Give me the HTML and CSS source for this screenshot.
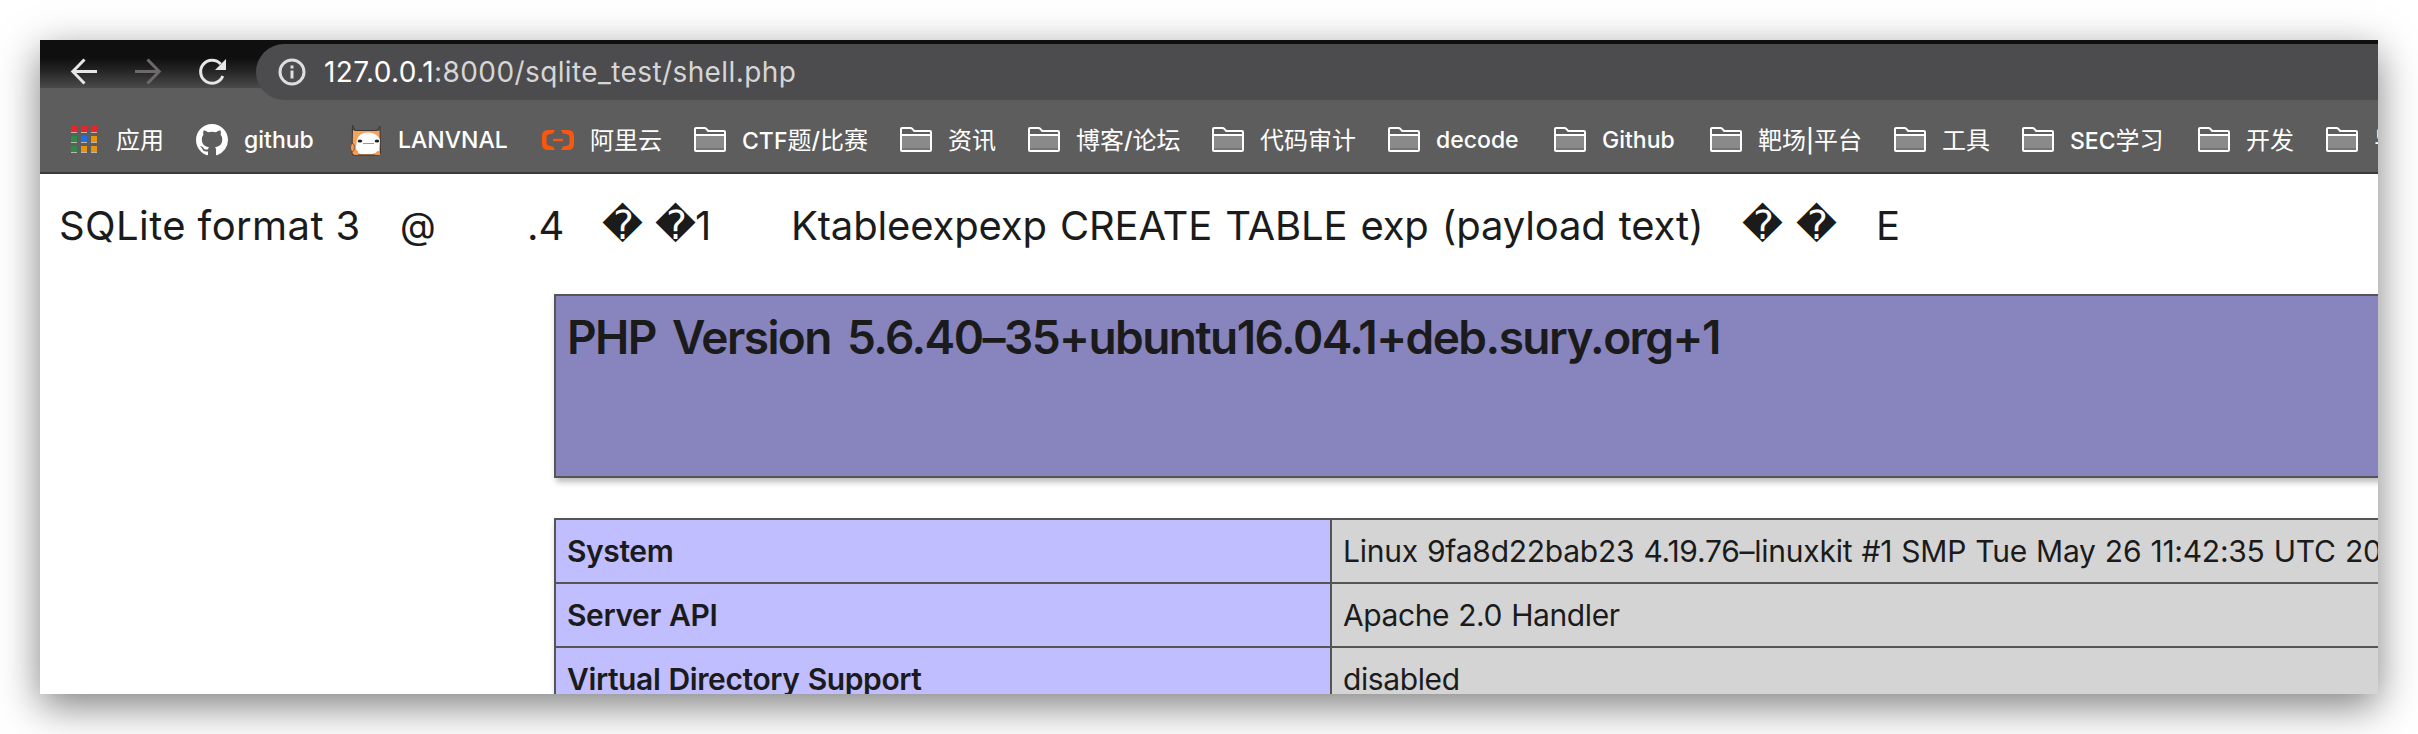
FILE: index.html
```html
<!DOCTYPE html>
<html lang="zh-CN">
<head>
<meta charset="utf-8">
<title>phpinfo()</title>
<link rel="stylesheet" href="styles.css">
</head>
<body>
<svg class="defs" width="0" height="0">
  <symbol id="folder" viewBox="0 0 32 32">
    <rect x="2" y="12" width="28" height="13" fill="#8a8a8a"/>
    <rect x="2" y="24" width="28" height="2" fill="#757575"/>
    <path d="M1 26.5V5Q1 4 2 4H10.5Q11.5 4 12.3 4.9L14.2 7H30Q31 7 31 8V26Q31 27 30 27H2Q1 27 1 26Z" fill="none" stroke="#fff" stroke-width="2"/>
    <path d="M1 11H31" stroke="#fff" stroke-width="2"/>
  </symbol>
</svg>
<div class="window">
  <header class="chrome">
    <div class="toolbar">
      <nav class="nav">
        <svg width="32" height="32" viewBox="0 0 32 32" fill="none" stroke="#e6e6e6" stroke-width="3"><path d="M29 15.5H5M16.5 3.5L4.8 15.5L16.5 27.5"/></svg>
        <svg width="32" height="32" viewBox="0 0 32 32" fill="none" stroke="#6d696a" stroke-width="3"><path d="M3 15.5H27M15.5 3.5L27.2 15.5L15.5 27.5"/></svg>
        <svg width="32" height="32" viewBox="0 0 32 32" fill="none" stroke="#e6e6e6" stroke-width="3"><path d="M24.6 8A11.5 11.5 0 1 0 26.8 20"/><path d="M30 3V14H19Z" fill="#e6e6e6" stroke="none"/></svg>
      </nav>
      <div class="omnibox">
        <svg width="28" height="28" viewBox="0 0 28 28"><circle cx="14" cy="14" r="12" fill="none" stroke="#dedede" stroke-width="3"/><path d="M12.5 7.5H15.5V10.5H12.5ZM12.5 12.5H15.5V20.5H12.5Z" fill="#dedede"/></svg>
        <span class="url"><b>127.0.0.1</b>:8000/sqlite_test/shell.php</span>
      </div>
    </div>
    <div class="bookmarks">
      <a class="bm w96"><svg width="32" height="32" viewBox="0 0 32 32">
        <path d="M3 8.500h6M13 8.500h6M23 8.500h6M3 18.500h6M13 18.500h6M23 18.500h6M3 28.500h6M13 28.500h6M23 28.500h6" stroke="#bdb5ad"/>
        <path d="M3 2h6v6h-6zM13 2h6v6h-6zM23 2h6v6h-6z" fill="#eb2429"/>
        <path d="M3 12h6v6h-6zM3 22h6v6h-6z" fill="#2e8b45"/>
        <path d="M13 12h6v6h-6z" fill="#1f6fe6"/>
        <path d="M23 12h6v6h-6zM13 22h6v6h-6zM23 22h6v6h-6z" fill="#e8930f"/>
      </svg><span class="label"><i>应用</i></span></a>
      <a class="bm w122"><svg width="32" height="32" viewBox="0 0 16 16"><path fill="#fff" d="M8 0C3.58 0 0 3.58 0 8c0 3.54 2.29 6.53 5.470 7.590.4.070.55-.17.55-.38 0-.19-.01-.82-.01-1.490-2.010.37-2.530-.49-2.690-.94-.09-.23-.48-.94-.82-1.130-.28-.15-.68-.52-.01-.53.63-.01 1.080.58 1.230.82.72 1.210 1.870.87 2.330.66.070-.52.28-.87.51-1.070-1.780-.2-3.640-.89-3.640-3.950 0-.87.31-1.590.82-2.150-.08-.2-.36-1.020.08-2.120 0 0 .67-.21 2.200.82.64-.18 1.320-.27 2-.27s1.360.09 2 .27c1.530-1.040 2.200-.82 2.200-.82.44 1.100.16 1.920.08 2.120.51.56.82 1.270.82 2.150 0 3.070-1.870 3.750-3.650 3.950.29.25.54.73.54 1.480 0 1.070-.01 1.930-.01 2.200 0 .21.15.46.55.38A8.010 8.010 0 0 0 16 8c0-4.420-3.580-8-8-8z"/></svg><span class="label">github</span></a>
      <a class="bm w160"><svg width="32" height="32" viewBox="0 0 32 32">
        <path d="M2.500 1L5 6.500H27L30 2L30.500 29Q30 31 28 31H4Q2 31 2 29Z" fill="#f4a35f" stroke="#3b3430" stroke-width="1"/>
        <path d="M2.500 1L2.800 6L5.500 7ZM30 2L29.800 6.500L27 7Z" fill="#4a4039"/>
        <path d="M7 16Q9 8.500 18 8.500Q27 8.500 30 16L29 27Q25 30 22 30H11Q6 29 6 23Z" fill="#fff"/>
        <path d="M5 28Q6 24 8 28V31H4ZM25 31Q27 25 30 28V31Z" fill="#f09a55"/>
        <ellipse cx="2.500" cy="23.500" rx="2" ry="4" fill="#f09a55" stroke="#4a4039" stroke-width=".7"/>
        <ellipse cx="10" cy="17" rx="2.300" ry="1.500" fill="#222"/><ellipse cx="27" cy="17" rx="2.300" ry="1.500" fill="#222"/>
        <path d="M13 19.500H24" stroke="#999"/>
      </svg><span class="label">LANVNAL</span></a>
      <a class="bm w120"><svg width="32" height="32" viewBox="0 0 32 32"><path d="M13 6H6Q0 6 0 12V20Q0 26 6 26H13L11 22.500L7 21.700Q4.500 21 4.500 19V13Q4.500 11 7 10.300L11 9.500ZM19 6H26Q32 6 32 12V20Q32 26 26 26H19L21 22.500L25 21.700Q27.500 21 27.500 19V13Q27.500 11 25 10.300L21 9.500ZM11 14.700H21V17.300H11Z" fill="#f9560e"/></svg><span class="label"><i>阿里云</i></span></a>
      <a class="bm w174"><svg width="32" height="32"><use href="#folder"/></svg><span class="label">CTF<i>题</i>/<i>比赛</i></span></a>
      <a class="bm w96"><svg width="32" height="32"><use href="#folder"/></svg><span class="label"><i>资讯</i></span></a>
      <a class="bm w152"><svg width="32" height="32"><use href="#folder"/></svg><span class="label"><i>博客</i>/<i>论坛</i></span></a>
      <a class="bm w144"><svg width="32" height="32"><use href="#folder"/></svg><span class="label"><i>代码审计</i></span></a>
      <a class="bm w134"><svg width="32" height="32"><use href="#folder"/></svg><span class="label">decode</span></a>
      <a class="bm w124"><svg width="32" height="32"><use href="#folder"/></svg><span class="label">Github</span></a>
      <a class="bm w152"><svg width="32" height="32"><use href="#folder"/></svg><span class="label"><i>靶场</i>|<i>平台</i></span></a>
      <a class="bm w96"><svg width="32" height="32"><use href="#folder"/></svg><span class="label"><i>工具</i></span></a>
      <a class="bm w144"><svg width="32" height="32"><use href="#folder"/></svg><span class="label">SEC<i>学习</i></span></a>
      <a class="bm w96"><svg width="32" height="32"><use href="#folder"/></svg><span class="label"><i>开发</i></span></a>
      <a class="bm w96"><svg width="32" height="32"><use href="#folder"/></svg><span class="label"><i>导</i></span></a>
    </div>
  </header>
  <main class="page">
    <div class="dump">
      <span class="t1">SQLite format 3</span><span class="at">@</span><span>.4</span><span class="bad">&#xFFFD;</span><span class="bad">&#xFFFD;</span><span>1</span><span class="t2">Ktableexpexp CREATE TABLE exp (payload text)</span><span class="bad">&#xFFFD;</span><span class="bad">&#xFFFD;</span><span>E</span>
    </div>
    <div class="info">
      <div class="banner"><h1>PHP Version 5.6.40–35+ubuntu16.04.1+deb.sury.org+1</h1></div>
      <div class="table">
        <div class="e">System</div><div class="v long">Linux 9fa8d22bab23 4.19.76–linuxkit #1 SMP Tue May 26 11:42:35 UTC 20</div>
        <div class="e">Server API</div><div class="v">Apache 2.0 Handler</div>
        <div class="e">Virtual Directory Support</div><div class="v">disabled</div>
      </div>
    </div>
  </main>
</div>
</body>
</html>
```
FILE: styles.css
```css
* { box-sizing: border-box; }
html, body { margin: 0; height: 734px; overflow: hidden; }
body {
  padding: 40px;
  background: #fff;
  font-family: Inter, "Noto Sans CJK SC", sans-serif;
  color: #1b1b1b;
}
.defs { display: block; height: 0; }
.window {
  width: 2338px;
  height: 654px;
  overflow: hidden;
  background: #fff;
  box-shadow: 0 12px 38px rgba(0, 0, 0, .5);
}

/* browser chrome */
.chrome {
  height: 134px;
  border-bottom: 2px solid #3b3b3b;
  background: linear-gradient(#0f0f0f 0, #0f0f0f 18px, #232323 30px, #4a4a4a 48px, #5d5d5d 48px);
}
.toolbar { display: flex; padding-top: 4px; background: linear-gradient(#0f0f0f 4px, transparent 4px); }
.nav { display: flex; gap: 32px; width: 216px; padding: 12px 0 0 28px; }
.nav svg { flex: none; }
.omnibox {
  display: flex;
  flex: 1;
  align-items: center;
  gap: 18px;
  height: 56px;
  padding-left: 22px;
  border-radius: 28px 0 0 28px;
  background: #4c4c4e;
}
.url { font-size: 28px; line-height: 56px; letter-spacing: .4px; color: #d6d6d6; white-space: nowrap; }
.url b { font-weight: 400; color: #fff; }
.bookmarks { display: flex; gap: 32px; padding: 24px 0 0 28px; }
.bm { display: flex; flex: none; align-items: center; gap: 16px; height: 32px; color: #fff; }
.bm svg { flex: none; }
.label { font-size: 23px; font-weight: 500; line-height: 32px; white-space: nowrap; }
.label i { font: 400 24px/32px "Noto Sans CJK SC", sans-serif; }
.w96 { width: 96px; }
.w120 { width: 120px; }
.w122 { width: 122px; }
.w124 { width: 124px; }
.w134 { width: 134px; }
.w144 { width: 144px; }
.w152 { width: 152px; }
.w160 { width: 160px; }
.w174 { width: 174px; }

/* page */
.page { height: 520px; padding: 29px 0 0 19px; overflow: hidden; }
.dump {
  display: grid;
  grid-template-columns: 341px 127px 75px 53px 40px 96px 951px 54px 80px auto;
  height: 45px;
  font-size: 40px;
  line-height: 45px;
  white-space: nowrap;
}
.t1 { letter-spacing: .4px; }
.t2 { letter-spacing: -.15px; word-spacing: 2px; }
.at { font-size: 37px; }
.bad { font-family: "DejaVu Sans", sans-serif; }
.info { width: 1868px; margin: 46px 0 0 495px; }
.banner {
  height: 184px;
  padding: 13px 11px;
  border: 2px solid #555;
  background: #8784be;
  box-shadow: 2px 4px 6px #bbb;
}
.banner h1 { margin: 0; font-size: 46px; font-weight: 600; line-height: 56px; letter-spacing: -1.55px; word-spacing: 6px; white-space: nowrap; }
.table {
  display: grid;
  grid-template-columns: 774px 1fr;
  gap: 2px;
  margin-top: 40px;
  padding: 2px;
  background: #555;
  box-shadow: 2px 4px 6px #bbb;
  font-size: 30px;
  line-height: 62px;
  letter-spacing: -.4px;
  word-spacing: 1px;
  white-space: nowrap;
}
.e { height: 62px; padding-left: 11px; font-weight: 600; background: #c0beff; }
.v { height: 62px; padding-left: 11px; background: #d4d4d4; overflow: hidden; }
.long { letter-spacing: -.25px; }
```
